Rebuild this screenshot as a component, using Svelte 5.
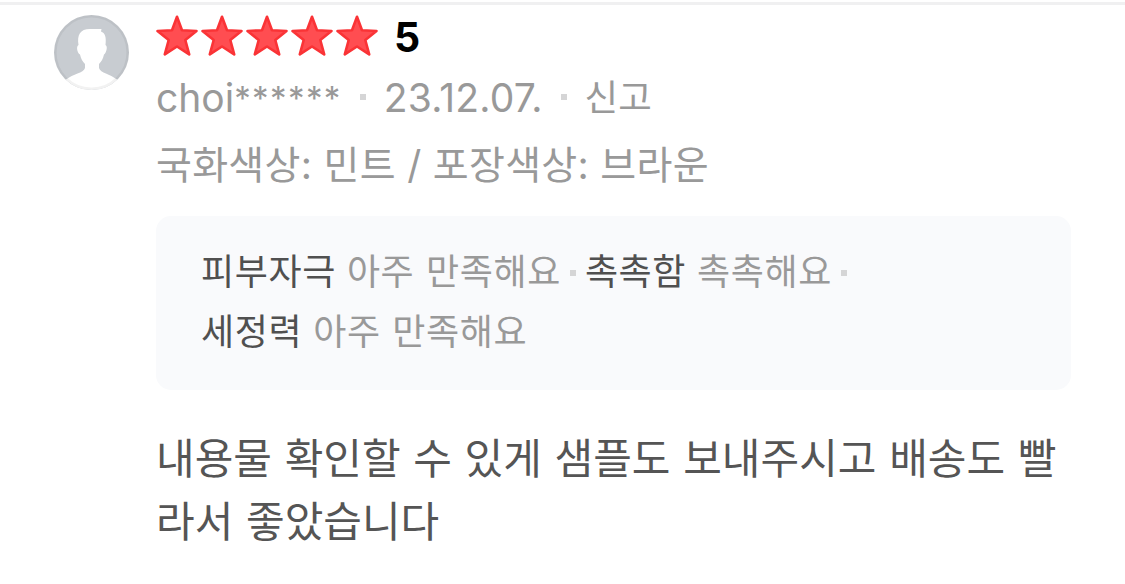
<script lang="ts">
  type Satisfaction = { label: string; value: string };

  const score = 5;
  const author = 'choi';
  const masked = '******';
  const date = '23.12.07.';
  const option = '국화색상: 민트 / 포장색상: 브라운';
  const satisfactions: Satisfaction[] = [
    { label: '피부자극', value: '아주 만족해요' },
    { label: '촉촉함', value: '촉촉해요' },
    { label: '세정력', value: '아주 만족해요' }
  ];
  const content = '내용물 확인할 수 있게 샘플도 보내주시고 배송도 빨라서 좋았습니다';
</script>

<article class="review">
  <svg class="avatar" viewBox="0 0 75 75" aria-hidden="true">
    <defs>
      <clipPath id="avatar-clip"><circle cx="37.5" cy="37.5" r="37.5" /></clipPath>
    </defs>
    <g clip-path="url(#avatar-clip)">
      <rect width="75" height="75" fill="#c8ccd1" />
      <path
        fill="#fff"
        d="M24.5 30C23 20 26 14 36 14h11.5l-.5 2.500C51 18 52.500 22 51.500 30c2.500 1 1 8-1.500 9.500-1 4.500-2.500 7-5 9.500v4c1.500 5 11 6 18 11.500l12 10.500H0l12-10.500C19 59 29.500 58 31 53v-4c-2.500-2.500-4-5-5-9.500-3-1.500-4-8.500-1.500-9.500z"
      />
    </g>
    <circle cx="37.5" cy="37.5" r="36.2" fill="none" stroke="#000" stroke-opacity=".05" stroke-width="2.6" />
  </svg>

  <div class="body">
    <div class="rating">
      <div class="stars">
        {#each Array(score) as _}
          <svg class="star" viewBox="0 0 45 42" aria-hidden="true">
            <path
              d="M21 1.800L26 15.200 40.500 16 29.300 25 33.200 39.400 21 31.500 8.800 39.400 12.700 25 1.500 16 16 15.200z"
            />
          </svg>
        {/each}
      </div>
      <em class="score">{score}</em>
    </div>

    <div class="meta">
      <span class="author">{author}<span class="masked">{masked}</span></span>
      <i class="dot"></i>
      <span class="date">{date}</span>
      <i class="dot"></i>
      <button class="report" type="button">신고</button>
    </div>

    <div class="option">{option}</div>

    <dl class="satisfactions">
      {#each satisfactions as item, i}
        <div class="item">
          <dt>{item.label}</dt>
          <dd>{item.value}</dd>
          {#if i < satisfactions.length - 1}<i class="dot"></i>{/if}
        </div>
      {/each}
    </dl>

    <p class="content">{content}</p>
  </div>
</article>

<style>
  :global(body) {
    margin: 0;
    background: #fff;
  }

  .review {
    display: flex;
    box-sizing: border-box;
    width: 1125px;
    height: 582px;
    overflow: hidden;
    padding: 10px 54px 0;
    border-top: 3px solid #f0f0f1;
    margin-top: 2px;
    font-family: Inter, 'Noto Sans CJK KR', sans-serif;
    color: #999;
  }

  .avatar {
    flex: none;
    width: 75px;
    height: 75px;
    margin-right: 27px;
  }

  .body {
    flex: 1;
    min-width: 0;
  }

  .rating {
    display: flex;
    align-items: center;
    height: 42px;
  }

  .stars {
    display: flex;
  }

  .star {
    width: 45px;
    height: 42px;
    fill: #ff4d51;
    stroke: #fa3336;
    stroke-width: 2.6;
    stroke-linejoin: round;
  }

  .score {
    margin: 1px 0 0 13px;
    font-size: 41px;
    font-style: normal;
    font-weight: 700;
    color: #000;
  }

  .meta {
    display: flex;
    align-items: center;
    height: 60px;
    margin-top: 10px;
    font-size: 39px;
    white-space: nowrap;
  }

  .masked {
    font-size: 33px;
    letter-spacing: 1.4px;
    vertical-align: 2px;
  }

  .date {
    letter-spacing: 0.2px;
  }

  .dot {
    flex: none;
    width: 6px;
    height: 6px;
    background: #d5d5d6;
  }

  .meta .dot {
    margin: 0 18px 0 18px;
  }

  .report {
    padding: 0 0 4px;
    border: 0;
    background: none;
    font: inherit;
    font-family: 'Noto Sans CJK KR', sans-serif;
    font-size: 36.5px;
    color: inherit;
  }

  .option {
    height: 60px;
    margin-top: 8px;
    font-size: 39px;
    line-height: 60px;
    letter-spacing: 0.3px;
    white-space: nowrap;
  }

  .satisfactions {
    display: flex;
    flex-wrap: wrap;
    align-content: flex-start;
    box-sizing: border-box;
    width: 915px;
    height: 174px;
    margin: 21px 0 0;
    padding: 26px 200px 0 45px;
    border-radius: 15px;
    background: #f9fafc;
    font-family: 'Noto Sans CJK KR', sans-serif;
    font-size: 36px;
    line-height: 54px;
    letter-spacing: 0.6px;
    white-space: nowrap;
  }

  .item {
    display: flex;
    align-items: center;
    height: 60px;
  }

  dt,
  dd {
    height: 60px;
  }

  dt {
    color: #505050;
  }

  dd {
    margin: 0 0 0 11px;
    word-spacing: 3px;
  }

  .item .dot {
    margin: 2px 9px 0;
  }

  .content {
    margin: 34px 0 0;
    font-family: 'Noto Sans CJK KR', sans-serif;
    font-size: 42px;
    line-height: 63px;
    word-break: break-all;
    word-spacing: 3.3px;
    color: #555;
  }
</style>
